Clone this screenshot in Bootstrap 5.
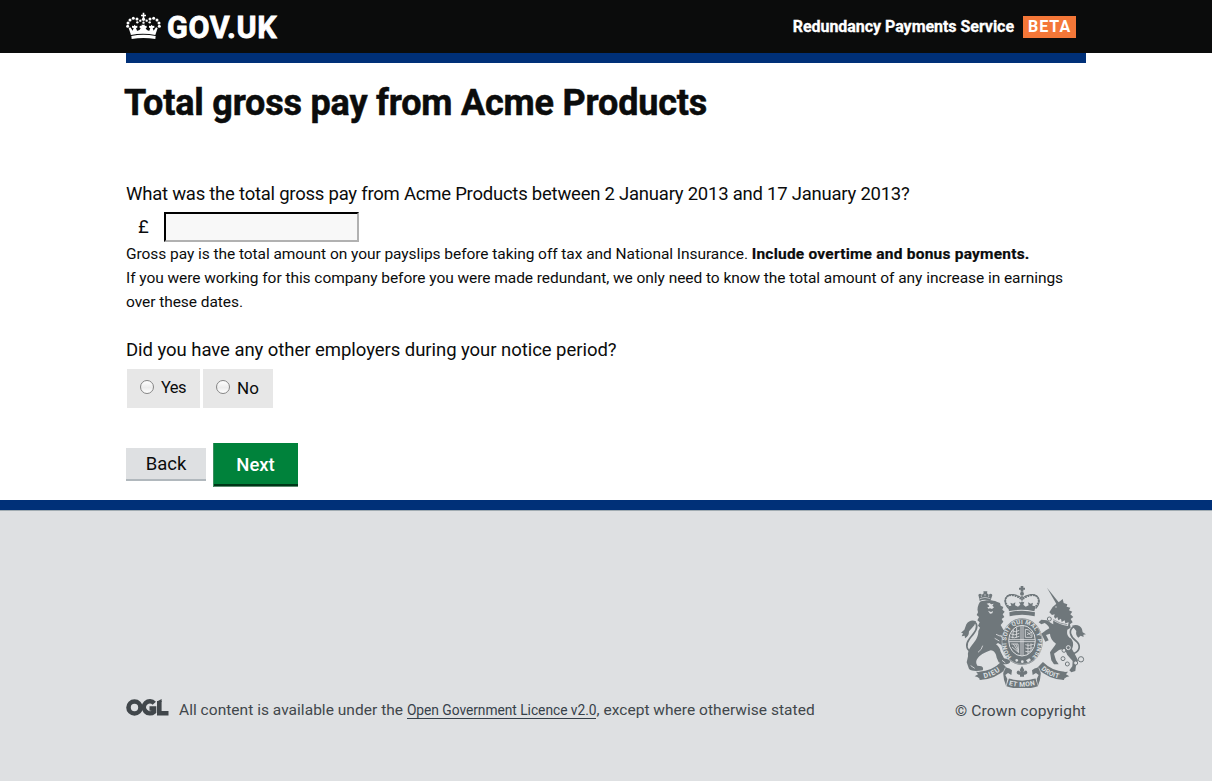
<!DOCTYPE html>
<html lang="en">
<head>
<meta charset="utf-8">
<meta name="viewport" content="width=device-width, initial-scale=1">
<title>Total gross pay - Redundancy Payments Service</title>
<link rel="stylesheet" href="https://cdn.jsdelivr.net/npm/bootstrap@5.3.0/dist/css/bootstrap.min.css">
<style>
body{font-family:Roboto,"Liberation Sans",sans-serif;color:#0b0c0c;background:#dee0e2}
.page-width{width:960px;margin:0 auto}
.masthead{height:53px;background:#0b0c0c;color:#fff}
.crown{width:35px;height:28px;margin-top:-1px}
.wordmark{font-size:30.5px;font-weight:700;line-height:34px;letter-spacing:.65px;margin:2px 0 0 6px;-webkit-text-stroke:.8px #fff}
.service{font-size:16px;letter-spacing:-.04px;font-weight:700;-webkit-text-stroke:.3px #fff}
.beta{background:#f47738;font-size:16px;font-weight:700;line-height:22px;height:22px;width:53px;letter-spacing:1px;padding-left:5px;margin:0 10px 0 9px}
.blue-bar{height:10px;background:#003078}
.content-area{height:447px}
.page-title{font-size:36px;font-weight:700;line-height:40px;letter-spacing:-.2px;margin:20px 0 59px -2px;-webkit-text-stroke:.5px #0b0c0c}
.question{font-size:18.5px;line-height:25px;letter-spacing:-.045px}
.question-pay{letter-spacing:-.235px}
.pay-line{margin-top:5px}
.pound{width:38px;padding-left:12px;font-size:18.5px;line-height:30px}
.money{width:195px;height:30px;background:#f8f8f8;border:2px solid;border-color:#000 #b1b1b1 #b1b1b1 #000;border-radius:0;outline:0}
.help{font-size:15.5px;line-height:24px;letter-spacing:-.056px;margin-bottom:24px}
.help b{letter-spacing:.22px;-webkit-text-stroke:.2px #0b0c0c}
.choices{gap:3px;margin:6px 0 35px 1px}
.choice{width:73px;height:39px;background:#e7e7e7;font-size:16.5px;letter-spacing:-.6px;padding-left:13px}
.choice-no{width:70px;font-size:17px;letter-spacing:0}
.choice input{appearance:none;width:14px;height:14px;border:1px solid #858585;border-radius:50%;background:linear-gradient(#fff,#ececec 55%,#fff);margin:0 7px 3px 0}
.actions{gap:7px}
.btn-back,.btn-next{border:0;border-radius:0;padding:0;font-size:18.5px}
.btn-back,.btn-back:hover{width:80px;height:33px;margin-bottom:2px;background:#dee0e2;color:#0b0c0c;line-height:33px;box-shadow:inset 0 -2px #b1b8bd}
.btn-next,.btn-next:hover{width:85px;height:44px;background:#00823b;color:#fff;line-height:44px;font-weight:500;box-shadow:inset 1px 0 #3b8f5f,inset 0 -1px #5f8a70,inset 0 -3px #003618}
.site-foot{height:281px;border-top:10px solid #003078;background:#dee0e2;color:#41474b;font-size:15.5px;box-shadow:inset 0 1px #a1acb2}
.foot-row{height:212px}
.ogl{width:43px;height:17px;margin:0 10px 6px 0}
.licence{letter-spacing:.03px;line-height:22px;padding-bottom:1px}
.licence a{color:#36404a;font-size:13.8px;letter-spacing:-.04px;text-decoration:none;border-bottom:1px solid #36404a}
.copyright{width:131px;line-height:22px;font-size:15.5px;letter-spacing:.16px}
.arms{width:125px;height:103.3px;margin-bottom:12px}
.arms text{font-family:Roboto,sans-serif;font-weight:700;fill:#dee0e2}
</style>
</head>
<body>
<header class="masthead">
 <div class="page-width h-100 d-flex align-items-center">
  <svg class="crown" viewBox="18 36 105 84" fill="#fff">
   <path d="M68 38h5v6h5v5h-5v8h-5v-8h-5v-5h5z"/>
   <circle cx="70.500" cy="58" r="5"/><circle cx="70.500" cy="68" r="3.500"/>
   <circle cx="51" cy="57" r="4.500"/><circle cx="90" cy="57" r="4.500"/><circle cx="61" cy="62" r="3.500"/><circle cx="80" cy="62" r="3.500"/>
   <circle cx="40" cy="55" r="4.500"/><circle cx="101" cy="55" r="4.500"/>
   <circle cx="30" cy="60" r="4.500"/><circle cx="111" cy="60" r="4.500"/>
   <circle cx="24" cy="69" r="4.500"/><circle cx="117" cy="69" r="4.500"/><circle cx="23" cy="79" r="4.500"/><circle cx="118" cy="79" r="4.500"/><circle cx="52" cy="67" r="3.500"/><circle cx="89" cy="67" r="3.500"/>
   <path d="M33 105 26 84l5-2 7 10 3-8-5-1v-6l5 1 3-4 3 4 5-1v6l-4 1 3 8q8 1 11-7l-4-3 2-5 5 1-1-4h11l-1 4 5-1 2 5-4 3q3 8 11 7l3-8-4-1v-6l5 1 3-4 3 4 5-1v6l-5 1 3 8 7-10 5 2-7 21q-37-8-75 0z"/>
   <path d="M34 108q36-7 73 0l-1 9q-36-6-71 0z"/>
  </svg>
  <div class="wordmark">GOV.UK</div>
  <div class="service ms-auto">Redundancy Payments Service</div>
  <div class="beta">BETA</div>
 </div>
</header>
<main class="content-area bg-white">
 <form class="page-width">
  <div class="blue-bar"></div>
  <h1 class="page-title">Total gross pay from Acme Products</h1>
  <label class="question question-pay d-block" for="pay">What was the total gross pay from Acme Products between 2 January 2013 and 17 January 2013?</label>
  <div class="pay-line d-flex">
   <span class="pound">£</span><input class="money" id="pay" type="text">
  </div>
  <p class="help">Gross pay is the total amount on your payslips before taking off tax and National Insurance. <b>Include overtime and bonus payments.</b><br>If you were working for this company before you were made redundant, we only need to know the total amount of any increase in earnings<br>over these dates.</p>
  <div class="question">Did you have any other employers during your notice period?</div>
  <div class="choices d-flex">
   <label class="choice d-flex align-items-center"><input type="radio" name="other">Yes</label>
   <label class="choice choice-no d-flex align-items-center"><input type="radio" name="other">No</label>
  </div>
  <div class="actions d-flex align-items-center">
   <button type="button" class="btn btn-back">Back</button>
   <button type="button" class="btn btn-next">Next</button>
  </div>
 </form>
</main>
<footer class="site-foot">
 <div class="page-width foot-row d-flex align-items-end">
  <svg class="ogl" viewBox="0 0 43 17" fill="none" stroke="#41474b" stroke-width="4.6">
   <circle cx="8.5" cy="8.5" r="6"/>
   <path d="M28.300 4.200A6 6 0 1 0 28 12.700V9.500h-4.500"/>
   <path d="M33.300 2v12.300H42.500"/><path d="M31 2.500 35.600 0v3z" fill="#41474b" stroke="none"/>
  </svg>
  <div class="licence text-nowrap">All content is available under the <a href="#">Open Government Licence v2.0</a>, except where otherwise stated</div>
  <div class="ms-auto d-flex flex-column align-items-end">
   <svg class="arms" viewBox="33 30 375 310" fill="#6f777b">
    <!-- crown over the shield -->
    <path d="M212 33h8v5h5v6h-5v6h-8v-6h-5v-6h5z"/><circle cx="216" cy="56" r="6"/>
    <g fill="none" stroke="#6f777b" stroke-width="6" stroke-linecap="round" stroke-dasharray=".1 8"><path d="M179 98C155 78 168 58 188 61Q205 64 214 73"/><path d="M253 98C277 78 264 58 244 61Q227 64 218 73"/><path d="M216 66V92"/></g>
    <path fill="none" stroke="#6f777b" stroke-width="3.500" d="M176 101C155 78 168 56 190 59Q207 62 216 70Q225 62 242 59C264 56 278 78 257 101"/>
    <path d="M177 109 174 94l10-2-3-9 8 3 7-4-1 9 9 4 7-6-4-9 8 3 8-3-3 9 7 6 9-4-2-9 8 4 7-3-2 9 10 2-4 15q-39-9-79 0z"/>
    <path d="M178 112q38-10 77 0l-1 12q-38-9-75 0z"/>
    <!-- lion -->
    <path d="M89 78q15-8 32 0l5-14q3-7-5-8l-5 3-5-4 1-6h-12l1 6-5 4-5-3q-8 1-5 8z"/>
    <path fill="none" stroke="#dee0e2" stroke-width="2" d="M89 71q16-8 32 0M94 66v-5M105 63v-6M116 66v-5"/>
    <path d="M90 80C84 90 80 102 84 112L80 120 87 126 82 136 89 142 84 152 90 158 85 168C85 184 78 196 66 210C56 222 52 232 54 244L50 262 57 282C66 290 84 288 98 286Q102 278 94 274L82 272C76 262 78 254 88 244C100 234 112 230 122 226C134 228 138 236 140 248L146 262 158 267C170 270 184 264 180 257Q172 251 162 250L152 230C150 220 146 214 138 208L144 204 160 214 172 206 166 194 156 190 150 180 166 186 174 174 160 164 152 150 160 140 155 132 163 126 158 118 164 110 157 104 160 96 152 92 150 84 140 80C130 74 104 74 90 80Z"/>
    <path fill="#dee0e2" d="m110 86 8-2 6 4 7-2-4 6 5 5-6 5-6-2-5 1-3-4 6-2-2-4zM114 107l9 4 6-3-2 7-7 1z"/>
    <path fill="none" stroke="#dee0e2" stroke-width="2.500" d="m138 178 14 6m-18 6 14 8m-50 14q-2 12-14 20M62 272l12 8M156 256l10 8"/>
    <path fill="none" stroke="#6f777b" stroke-width="5" d="M66 230C48 226 46 208 58 192C72 174 86 160 78 145Q70 138 60 148"/>
    <path d="M78 139Q60 132 49 148l-6 16-10 9 6 2-4 9 9-2 1 8q12-6 12-21l16-18z"/>
    <!-- unicorn -->
    <path d="m291 38 37 46-7 6z"/>
    <path d="M322 84L331 78 338 72 341 84L352 88 350 95 361 98 357 106 367 110 361 118 370 126 362 132 368 142 360 148 362 158 352 164C350 176 352 184 362 190C370 198 372 210 366 222L376 240 384 256 378 272 376 288 364 292 358 286 367 274 368 258 352 240 344 222C336 224 330 222 326 226L312 236 318 256 326 268 312 268 304 256 300 232C306 222 314 214 318 206C306 198 300 186 300 176L288 180 296 196 286 200 274 176 288 166 298 160C296 152 290 148 284 144L274 148 266 142 274 134 290 136C298 140 304 146 310 148C308 138 312 128 314 118L306 120 298 112 308 96Z"/>
    <path fill="#dee0e2" d="M310 122l6 9 6-5 3 10 8-5 2 10 9-5 2 9 10-3-2 11q-24-3-47-18z"/>
    <path fill="none" stroke="#6f777b" stroke-width="2" d="M310 134q20 13 42 15"/><circle cx="318" cy="96" r="2" fill="#dee0e2"/>
    <g fill="none" stroke="#6f777b" stroke-width="3"><circle cx="298" cy="132" r="6"/><circle cx="355" cy="218" r="6" stroke="#dee0e2"/><circle cx="342" cy="226" r="6"/><circle cx="339" cy="251" r="6"/><circle cx="352" cy="267" r="6"/><circle cx="377" cy="264" r="6" fill="#dee0e2"/><circle cx="393" cy="253" r="8"/></g>
    <path fill="none" stroke="#6f777b" stroke-width="5" d="M370 236C392 228 392 210 378 198C360 184 356 168 368 157Q380 152 386 166"/>
    <path d="M366 152q22-6 30 10l2 10 10 6-8 1 1 7-9-4-7 6q-9-8-6-20z"/>
    <!-- garter and quartered shield -->
    <ellipse cx="216" cy="200" rx="62" ry="70"/>
    <ellipse cx="216" cy="200" rx="60" ry="68" fill="none" stroke="#dee0e2" stroke-width="1.500"/>
    <ellipse cx="216" cy="197" rx="40" ry="46" fill="none" stroke="#dee0e2" stroke-width="3"/>
    <g fill="none" stroke="#dee0e2" stroke-width="2.500"><path d="M177 194h78M177 200h78M213 152v90M219 152v90"/>
     <path d="M188 168q8 5 20-2M183 177q10 6 25-2M181 186q12 6 27-2M190 163l-2 27M200 157l-1 31M226 163q8-3 20 12v12h-20zM231 179l15-7M232 171l12 12M184 207h20l2 26-20-17M190 207l15 23M197 207l8 18M226 209q7 5 25-1M226 219q10 5 22-1M226 229q8 4 16-1M234 205v33M243 205v26"/></g>
    <path id="garter" fill="none" d="M185 246C164 226 162 174 188 155Q215 137 244 155C270 174 268 226 249 244"/>
    <text font-size="18"><textPath href="#garter" textLength="262">HONI SOIT QUI MAL Y PENSE</textPath></text>
    <g fill="#dee0e2"><circle cx="200" cy="256" r="4"/><circle cx="217" cy="260" r="4"/><path d="m228 256 10-6 5 5-9 8z"/></g>
    <!-- motto ribbon -->
    <g fill="none" stroke="#6f777b" stroke-width="25"><path d="M88 303Q132 300 162 270M343 303Q300 300 270 270"/><path d="M173 322Q216 336 260 322"/></g>
    <path d="M78 290l20 2-4 22-12-8-8-2 10-6zM354 290l-20 2 4 22 12-8 8-2-10-6zM158 284q14-12 28 2l-2 14-10-6-8 6 6 12-4 20-6-18zM274 284q-14-12-28 2l2 14 10-6 8 6-6 12 4 20 6-18z"/>
    <path fill="none" stroke="#dee0e2" stroke-width="2" d="M172 308q44 14 88 0M166 278l-8 18M266 278l8 18"/>
    <path d="m216 273 7 12-3 7q9-11 12 0 0 8-10 7v6h-12v-6q-10 1-10-7 3-11 12 0l-3-7z"/>
    <path id="dieu" fill="none" d="M103 310q32-7 56-30"/><path id="mon" fill="none" d="M176 330q40 11 84-1"/><path id="droit" fill="none" d="M273 283q23 22 58 28"/>
    <text font-size="21"><textPath href="#dieu" textLength="53">DIEU</textPath></text>
    <text font-size="20"><textPath href="#mon" textLength="80">ET MON</textPath></text>
    <text font-size="20"><textPath href="#droit" textLength="60">DROIT</textPath></text>
   </svg>
   <div class="copyright text-nowrap">© Crown copyright</div>
  </div>
 </div>
</footer>
</body>
</html>
